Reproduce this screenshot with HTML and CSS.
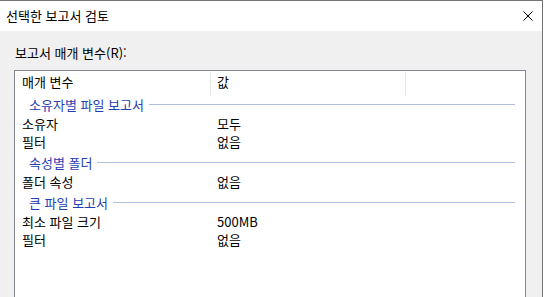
FILE: index.html
```html
<!DOCTYPE html>
<html lang="ko">
<head>
  <meta charset="UTF-8" />
  <title>선택한 보고서 검토</title>
  <link rel="stylesheet" href="styles.css">
</head>
<body>
  <div class="dialog">
    <div class="titlebar">
      <span class="title">선택한 보고서 검토</span>
      <span class="close">
        <svg width="10" height="10" viewBox="0 0 10 10">
          <path d="M0.5 0.5 L9.5 9.5 M9.5 0.5 L0.5 9.5" stroke="#000" stroke-width="1" fill="none"/>
        </svg>
      </span>
    </div>

    <div class="content">
      <div class="caption">보고서 매개 변수(R):</div>

      <div class="listview">
        <div class="lv-header">
          <div class="col col-name">매개 변수</div>
          <div class="col col-value">값</div>
          <div class="col col-rest"></div>
        </div>

        <div class="group first"><span>소유자별 파일 보고서</span></div>
        <div class="row"><span class="name">소유자</span><span class="value">모두</span></div>
        <div class="row"><span class="name">필터</span><span class="value">없음</span></div>

        <div class="group"><span>속성별 폴더</span></div>
        <div class="row"><span class="name">폴더 속성</span><span class="value">없음</span></div>

        <div class="group"><span>큰 파일 보고서</span></div>
        <div class="row"><span class="name">최소 파일 크기</span><span class="value">500MB</span></div>
        <div class="row"><span class="name">필터</span><span class="value">없음</span></div>
      </div>
    </div>
  </div>
</body>
</html>
```

FILE: styles.css
```css
html, body {
  height: 100%;
}

body {
  margin: 0;
  background: #ffffff;
  overflow: hidden;
  font-family: "Noto Sans CJK KR", "Noto Sans", sans-serif;
  font-size: 13px;
  color: #000;
}

.dialog {
  width: 543px;
  height: 100%;
  box-sizing: border-box;
  border-top: 1px solid #747474;
  border-right: 1px solid #747474;
  display: flex;
  flex-direction: column;
}

.titlebar {
  height: 30px;
  flex-shrink: 0;
  background: #ffffff;
  display: flex;
  align-items: center;
  justify-content: space-between;
}

.title {
  padding-left: 6px;
  line-height: 18px;
}

.close {
  display: flex;
  margin-right: 9px;
}

.content {
  flex: 1;
  min-height: 0;
  display: flex;
  flex-direction: column;
  background: #f0f0f0;
  padding: 13px 16px 0 14px;
}

.caption {
  padding-left: 1px;
  line-height: 18px;
  margin-bottom: 8px;
}

.listview {
  flex: 1;
  background: #ffffff;
  border: 1px solid #828790;
  border-bottom: none;
}

.lv-header {
  display: flex;
  height: 24px;
  padding-top: 1px;
}

.col {
  height: 24px;
  line-height: 20px;
  border-right: 1px solid #e5e5e5;
}

.col-name {
  width: 188px;
  padding-left: 7px;
}

.col-value {
  width: 188px;
  padding-left: 6px;
}

.col-rest {
  border-right: none;
}

.group {
  display: flex;
  align-items: center;
  gap: 5px;
  height: 17px;
  margin: 3px 0 2px;
  padding: 0 10px 0 14px;
  color: #1f41b4;
  line-height: 17px;
}

.group.first {
  margin-top: 0;
}

.group::after {
  content: "";
  flex: 1;
  height: 1px;
  background: #b0bddf;
}

.row {
  display: grid;
  grid-template-columns: 196px 1fr;
  height: 18px;
  line-height: 18px;
}

.row .name {
  padding-left: 7px;
}

.row .value {
  padding-left: 6px;
}
```
